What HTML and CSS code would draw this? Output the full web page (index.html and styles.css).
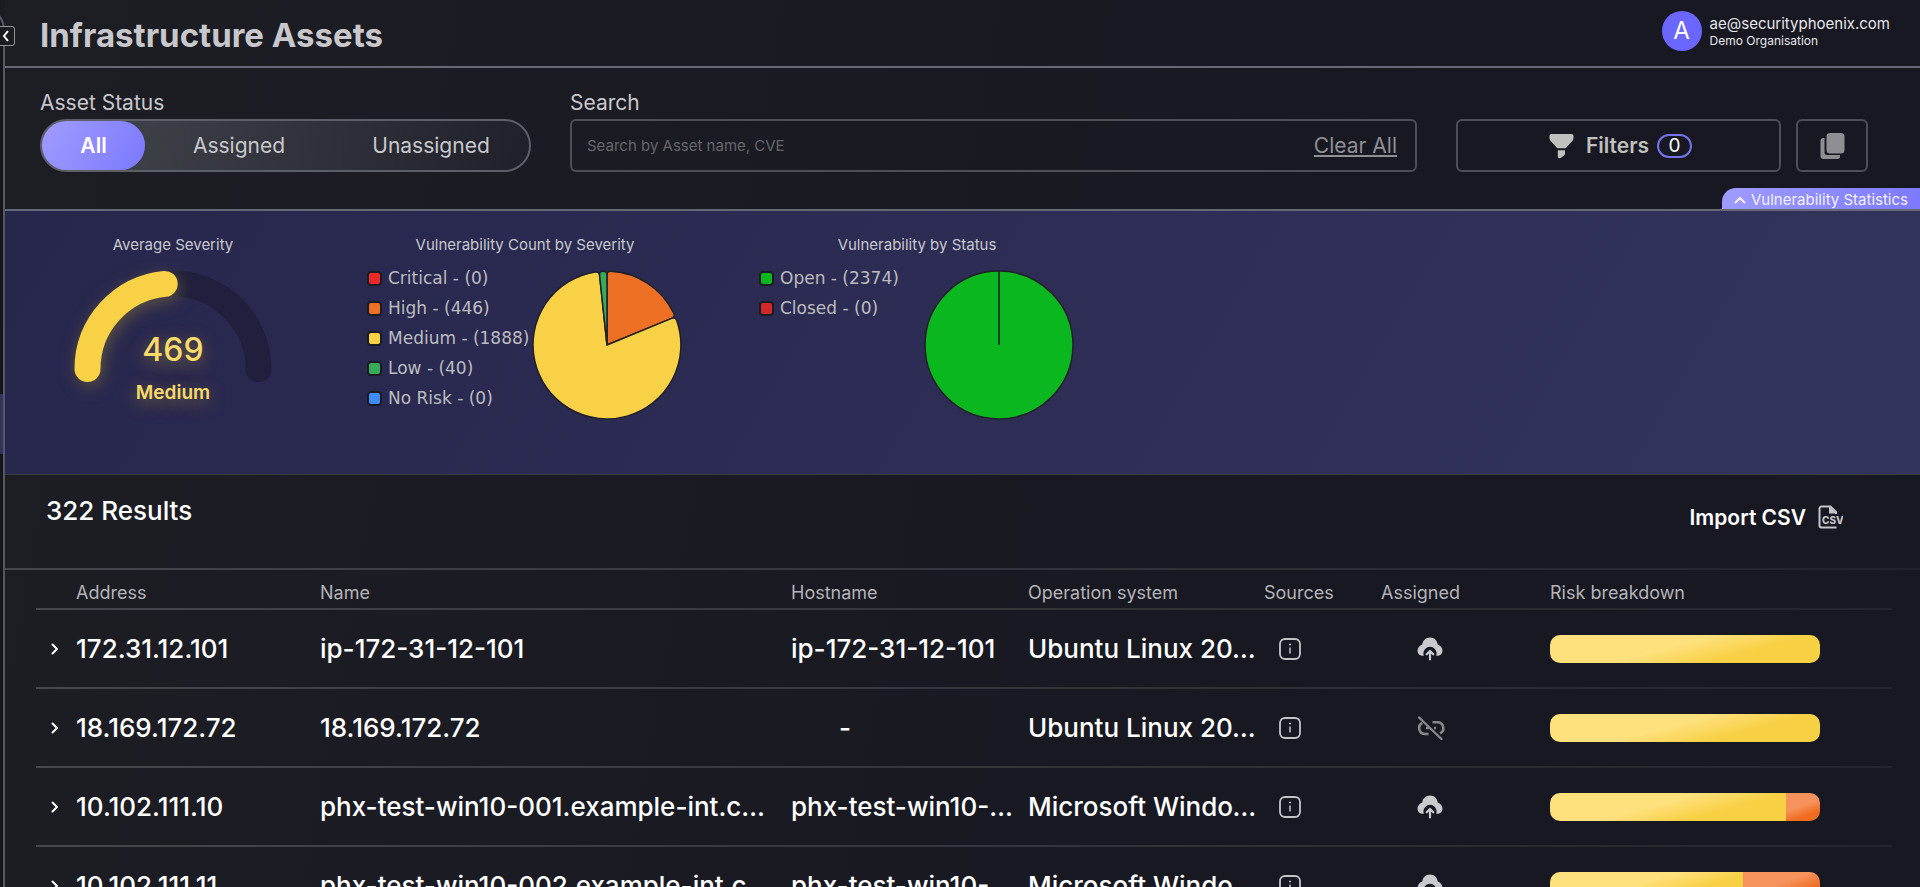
FILE: index.html
```html
<!DOCTYPE html>
<html lang="en">
  <head>
    <meta charset="UTF-8" />
    <meta name="viewport" content="width=device-width, initial-scale=1.0" />
    <title>Infrastructure Assets</title>
    <link rel="stylesheet" href="styles.css">
  </head>
  <body>
    <!-- icons used more than once -->
    <svg class="sprite" aria-hidden="true">
      <symbol id="chevron" viewBox="0 0 10 14">
        <path d="M2.500 2.500 7 7l-4.500 4.500" fill="none" stroke="currentColor" stroke-width="2" stroke-linecap="round" stroke-linejoin="round" />
      </symbol>
      <symbol id="info" viewBox="0 0 22 22">
        <rect x="1" y="1" width="20" height="20" rx="5" fill="none" stroke="currentColor" stroke-width="1.800" />
        <path d="M11 9.500v6" stroke="currentColor" stroke-width="1.500" />
        <circle cx="11" cy="6.500" r="1" fill="currentColor" />
      </symbol>
      <symbol id="cloud" viewBox="0 0 26 24">
        <path d="M13 0.500c-4.200 0-7.300 2.800-7.700 7C2.500 8.500 0.500 11 0.500 14c0 2.700 2 4.700 4.500 4.700h1.800a6.600 6.600 0 1 1 12.400 0H21c2.500 0 4.500-2 4.500-4.700 0-3-2-5.500-4.800-6.500-.4-4.200-3.500-7-7.700-7z" fill="currentColor" />
        <path d="M13 22.500v-8M9.700 17.300 13 14l3.300 3.300" fill="none" stroke="currentColor" stroke-width="2.200" stroke-linecap="round" stroke-linejoin="round" />
      </symbol>
      <symbol id="unlink" viewBox="0 0 28 24">
        <path d="M11.500 18H8.200a6 6 0 0 1-3-11.200M15.500 6.200h4.800a5.900 5.900 0 0 1 2.700 11.200M9 12h3.500M17 12h2" fill="none" stroke="currentColor" stroke-width="2.600" />
        <path d="M2 1.500 24.500 23" stroke="currentColor" stroke-width="2.400" stroke-linecap="round" />
      </symbol>
    </svg>

    <div class="app">
      <aside class="rail">
        <div class="rail-panel">
          <div class="rail-active"></div>
        </div>
      </aside>
      <button class="rail-toggle" type="button" aria-label="Collapse menu">
        <svg width="8" height="14" viewBox="0 0 8 14"><path d="M6 2 2 7l4 5" fill="none" stroke="currentColor" stroke-width="2" /></svg>
      </button>

      <div class="page">
        <header class="header">
          <h1>Infrastructure Assets</h1>
          <div class="user">
            <span class="avatar">A</span>
            <div>
              <div class="user-mail">ae@securityphoenix.com</div>
              <div class="user-org">Demo Organisation</div>
            </div>
          </div>
        </header>

        <div class="toolbar">
          <div class="field">
            <span class="label" id="statusLabel">Asset Status</span>
            <div class="switch" role="group" aria-labelledby="statusLabel">
              <button type="button" class="active">All</button>
              <button type="button">Assigned</button>
              <button type="button">Unassigned</button>
            </div>
          </div>
          <div class="field field-search">
            <label class="label" for="search">Search</label>
            <div class="search">
              <input id="search" type="text" placeholder="Search by Asset name, CVE" />
              <button type="button" class="clear">Clear All</button>
            </div>
          </div>
          <div class="actions">
            <button type="button" class="box filters">
              <svg width="25" height="26" viewBox="0 0 25 26" fill="currentColor">
                <path d="M2.500 1h20a2 2 0 0 1 2 2v2.200c0 1-.4 1.800-1 2.500l-6.800 7.600H8.300L1.500 7.700C.9 7 .5 6.200.5 5.200V3a2 2 0 0 1 2-2z" />
                <path d="M8.800 17.300h7.200v3.200c0 .9-.4 1.600-1 2.100l-3.500 2.300c-1.300.8-2.700.2-2.700-1.400z" />
              </svg>
              Filters
              <span class="count">0</span>
            </button>
            <button type="button" class="box copy" aria-label="Copy">
              <svg width="25" height="28" viewBox="0 0 25 28" fill="currentColor">
                <path d="M4.500 6v14.500A2.500 2.500 0 0 0 7 23h13v1.500a2.500 2.500 0 0 1-2.500 2.500H3.500A3 3 0 0 1 .5 24V9a3 3 0 0 1 3-3z" />
                <rect x="6.500" y="1" width="18" height="20.500" rx="3.500" />
              </svg>
            </button>
          </div>
          <button type="button" class="stats-tab">
            <svg width="12" height="8" viewBox="0 0 12 8"><path d="m1.500 6.500 4.500-4.500 4.500 4.500" fill="none" stroke="currentColor" stroke-width="2" stroke-linecap="round" /></svg>
            Vulnerability Statistics
          </button>
        </div>

        <section class="stats">
          <div class="stat stat-gauge">
            <h2>Average Severity</h2>
            <div class="gauge">
              <svg width="240" height="150" viewBox="0 0 240 150">
                <path class="gauge-track" d="M34.500 111a85.500 85.500 0 0 1 171 0" />
                <path class="gauge-value" d="M34.500 111A85.500 85.500 0 0 1 111.700 25.900" />
              </svg>
              <div class="gauge-text">
                <div class="gauge-number">469</div>
                <div class="gauge-level">Medium</div>
              </div>
            </div>
          </div>

          <div class="stat">
            <h2>Vulnerability Count by Severity</h2>
            <div class="chart">
              <ul class="legend">
                <li><i class="critical"></i>Critical - (0)</li>
                <li><i class="high"></i>High - (446)</li>
                <li><i class="medium"></i>Medium - (1888)</li>
                <li><i class="low"></i>Low - (40)</li>
                <li><i class="norisk"></i>No Risk - (0)</li>
              </ul>
              <svg class="pie" width="152" height="152" viewBox="0 0 150 150">
                <path fill="#ee7024" d="M75 75V6Q75 2 79 2.100A73 73 0 0 1 140.800 43.500Q142.500 47.200 138.800 48.700Z" />
                <path fill="#f8d147" d="M75 75 138.800 48.700Q142.500 47.200 143.900 51A73 73 0 1 1 63.300 2.900Q67.200 2.400 67.700 6.400Z" />
                <path fill="#36ac5b" d="M75 75 67.700 6.400Q67.200 2.400 71 2.100Q75 2 75 6Z" />
              </svg>
            </div>
          </div>

          <div class="stat">
            <h2>Vulnerability by Status</h2>
            <div class="chart">
              <ul class="legend">
                <li><i class="open"></i>Open - (2374)</li>
                <li><i class="closed"></i>Closed - (0)</li>
              </ul>
              <svg class="pie" width="152" height="152" viewBox="0 0 150 150">
                <circle cx="75" cy="75" r="73" fill="#0ab71f" />
                <path d="M75 75V2" />
              </svg>
            </div>
          </div>
        </section>

        <section class="results">
          <div class="results-head">
            <h2>322 Results</h2>
            <button type="button" class="import">
              Import CSV
              <svg width="25" height="24" viewBox="0 0 25 24">
                <path d="M18.500 22.500H3.500a2 2 0 0 1-2-2v-17a2 2 0 0 1 2-2h9l5.500 5.500v2" fill="none" stroke="#c4c4c9" stroke-width="2" />
                <path d="M11 1v7.500h7.500z" fill="#c4c4c9" />
                <text x="4" y="18.500" fill="#c4c4c9">CSV</text>
              </svg>
            </button>
          </div>

          <table class="assets">
            <colgroup>
              <col class="col-toggle" />
              <col class="col-address" />
              <col class="col-name" />
              <col class="col-host" />
              <col class="col-os" />
              <col class="col-sources" />
              <col class="col-assigned" />
              <col class="col-risk" />
            </colgroup>
            <thead>
              <tr>
                <th></th>
                <th>Address</th>
                <th>Name</th>
                <th>Hostname</th>
                <th>Operation system</th>
                <th>Sources</th>
                <th>Assigned</th>
                <th>Risk breakdown</th>
              </tr>
            </thead>
            <tbody>
              <tr>
                <td><button type="button" class="expand" aria-label="Expand row"><svg width="10" height="14"><use href="#chevron" /></svg></button></td>
                <td>172.31.12.101</td>
                <td class="name">ip-172-31-12-101</td>
                <td>ip-172-31-12-101</td>
                <td>Ubuntu Linux 20.04</td>
                <td class="source"><svg width="22" height="22"><use href="#info" /></svg></td>
                <td class="assigned"><svg width="26" height="24"><use href="#cloud" /></svg></td>
                <td><div class="risk"><span class="risk-medium" style="width: 100%"></span></div></td>
              </tr>
              <tr>
                <td><button type="button" class="expand" aria-label="Expand row"><svg width="10" height="14"><use href="#chevron" /></svg></button></td>
                <td>18.169.172.72</td>
                <td class="name">18.169.172.72</td>
                <td class="empty">-</td>
                <td>Ubuntu Linux 20.04</td>
                <td class="source"><svg width="22" height="22"><use href="#info" /></svg></td>
                <td class="assigned unassigned"><svg width="28" height="24"><use href="#unlink" /></svg></td>
                <td><div class="risk"><span class="risk-medium" style="width: 100%"></span></div></td>
              </tr>
              <tr>
                <td><button type="button" class="expand" aria-label="Expand row"><svg width="10" height="14"><use href="#chevron" /></svg></button></td>
                <td>10.102.111.10</td>
                <td class="name">phx-test-win10-001.example-int.com</td>
                <td>phx-test-win10-001</td>
                <td>Microsoft Windows 10</td>
                <td class="source"><svg width="22" height="22"><use href="#info" /></svg></td>
                <td class="assigned"><svg width="26" height="24"><use href="#cloud" /></svg></td>
                <td><div class="risk"><span class="risk-medium" style="width: 87.500%"></span><span class="risk-high" style="width: 12.500%"></span></div></td>
              </tr>
              <tr>
                <td><button type="button" class="expand" aria-label="Expand row"><svg width="10" height="14"><use href="#chevron" /></svg></button></td>
                <td>10.102.111.11</td>
                <td class="name">phx-test-win10-002.example-int.com</td>
                <td>phx-test-win10-002</td>
                <td>Microsoft Windows 10</td>
                <td class="source"><svg width="22" height="22"><use href="#info" /></svg></td>
                <td class="assigned"><svg width="26" height="24"><use href="#cloud" /></svg></td>
                <td><div class="risk"><span class="risk-medium" style="width: 71.400%"></span><span class="risk-high" style="width: 28.600%"></span></div></td>
              </tr>
            </tbody>
          </table>
        </section>
      </div>
    </div>
  </body>
</html>
```
FILE: styles.css
```css
* {
  box-sizing: border-box;
}
body {
  margin: 0;
  height: 100vh;
  overflow: hidden;
  font-family: Inter, "Liberation Sans", sans-serif;
  color: #c8c8cc;
  background: linear-gradient(100deg, #1d1d24, #181822 70%);
}
h1,
h2 {
  margin: 0;
}
button {
  font-family: inherit;
  color: inherit;
  background: none;
  border: 0;
  padding: 0;
  cursor: pointer;
}
.sprite {
  display: none;
}
.app {
  display: flex;
  position: relative;
}
.page {
  flex: 1;
  min-width: 0;
}

/* collapsed sidebar edge */
.rail {
  position: relative;
  flex: 0 0 5px;
  height: 100vh;
  overflow: hidden;
  background: #1b1b23;
}
.rail-panel {
  position: absolute;
  top: 6px;
  right: 0;
  bottom: -40px;
  width: 60px;
  border: 2px solid #555863;
  border-radius: 24px;
  background: #15151b;
}
.rail-active {
  margin-top: 386px;
  height: 60px;
  background: #33325c;
}
.rail-toggle {
  position: absolute;
  top: 26px;
  left: -6px;
  width: 21px;
  height: 20px;
  padding-left: 3px;
  border: 1px solid #94949c;
  border-radius: 3px;
  background: #1b1b22;
  color: #fff;
  line-height: 0;
}

.header {
  display: flex;
  justify-content: space-between;
  height: 68px;
  padding: 11px 30px 0 35px;
  border-bottom: 2px solid #666975;
}
.header h1 {
  font-size: 33px;
  line-height: 48px;
  font-weight: 700;
}
.user {
  display: flex;
  gap: 8px;
  height: 40px;
  color: #e6e6ea;
}
.avatar {
  width: 40px;
  height: 40px;
  border-radius: 50%;
  background: #6a66ff;
  color: #fff;
  font-size: 24px;
  line-height: 40px;
  text-align: center;
}
.user-mail {
  padding-top: 2px;
  font-size: 15px;
  line-height: 22px;
}
.user-org {
  font-size: 12px;
  line-height: 12px;
}

.toolbar {
  position: relative;
  display: flex;
  align-items: flex-end;
  gap: 39px;
  height: 143px;
  padding: 0 52px 37px 35px;
  border-bottom: 2px solid #666975;
}
.label {
  display: block;
  font-size: 21px;
  line-height: 24px;
  margin-bottom: 4px;
}
.switch {
  display: flex;
  width: 491px;
  height: 53px;
  border: 2px solid #5d5f68;
  border-radius: 27px;
  background: linear-gradient(100deg, #45474f, #1f2029);
}
.switch button {
  flex: 196 0 0;
  font-size: 21px;
}
.switch button:nth-child(2) {
  flex-grow: 188;
}
.switch .active {
  flex: 0 0 103px;
  border-radius: 25px;
  background: linear-gradient(120deg, #a09cff, #7c79fd);
  color: #fff;
  font-weight: 600;
}
.field-search {
  flex: 1;
}
.search,
.box {
  height: 53px;
  border: 2px solid #4e4f56;
  border-radius: 6px;
}
.search {
  display: flex;
  align-items: center;
  padding: 0 18px 0 15px;
}
.search input {
  flex: 1;
  min-width: 0;
  padding: 0;
  border: 0;
  outline: none;
  background: none;
  color: #fff;
  font-family: inherit;
  font-size: 15px;
}
.search input::placeholder {
  color: #66666c;
}
.clear {
  font-size: 21px;
  text-decoration: underline;
  color: #8f8f95;
}
.actions {
  display: flex;
  gap: 15px;
}
.filters {
  display: flex;
  align-items: center;
  justify-content: center;
  gap: 8px;
  width: 325px;
  padding-left: 4px;
  font-size: 21px;
  font-weight: 600;
  color: #c0c0bf;
}
.filters svg {
  margin-right: 4px;
}
.count {
  width: 35px;
  height: 24px;
  border: 2px solid #7672ea;
  border-radius: 12px;
  color: #fff;
  font-size: 19px;
  font-weight: 400;
  line-height: 20px;
}
.copy {
  width: 72px;
  color: #8e8e93;
  line-height: 0;
}
.stats-tab {
  position: absolute;
  right: 0;
  bottom: 0;
  display: flex;
  align-items: center;
  gap: 5px;
  height: 21px;
  padding: 2px 12px 0;
  border-top-left-radius: 14px;
  background: linear-gradient(120deg, #a09cff, #7c79fd);
  color: #f0f0ff;
  font-size: 15px;
}

.stats {
  display: flex;
  height: 263px;
  padding: 24px 0 0 12px;
  background: linear-gradient(120deg, #27264d, #33345c);
}
.stat {
  width: 392px;
}
.stat-gauge {
  width: 312px;
}
.stat h2 {
  font-size: 15px;
  font-weight: 400;
  line-height: 20px;
  text-align: center;
}
.gauge {
  position: relative;
  text-align: center;
  color: #fadb6a;
  text-shadow: 0 4px 16px #80703f;
}
.gauge svg {
  display: block;
  margin: 3px auto 0;
}
.gauge path {
  fill: none;
  stroke-width: 26;
  stroke-linecap: round;
}
.gauge-track {
  stroke: #201f3d;
}
.gauge-value {
  stroke: #f8d147;
  filter: drop-shadow(2px 4px 8px #5c5240);
}
.gauge-text {
  position: absolute;
  top: 72px;
  left: 0;
  right: 0;
}
.gauge-number {
  font-size: 32px;
  font-weight: 500;
  line-height: 40px;
}
.gauge-level {
  margin-top: 8px;
  font-size: 19px;
  font-weight: 600;
  line-height: 30px;
}
.chart {
  display: flex;
  align-items: flex-start;
  padding: 8px 0 0 38px;
}
.legend {
  width: 164px;
  margin: 0;
  padding: 0;
  list-style: none;
  font-family: "DejaVu Sans", sans-serif;
  font-size: 17px;
  line-height: 30px;
  white-space: nowrap;
  color: #bcbcbf;
}
.legend li {
  display: flex;
  align-items: center;
  gap: 6px;
}
.legend i {
  width: 15px;
  height: 15px;
  border: 2px solid #1b1b24;
  border-radius: 4px;
}
.critical { background: #e92a29; }
.high { background: #ee7024; }
.medium { background: #f8d147; }
.low { background: #36ac5b; }
.norisk { background: #3f8cf4; }
.open { background: #0ab71f; }
.closed { background: #d32829; }
.pie {
  flex: none;
  margin-top: 6px;
}
.pie > * {
  stroke: #20202a;
  stroke-width: 1.5;
}

.results {
  border-top: 1px solid #3c3c43;
}
.results-head {
  display: flex;
  justify-content: space-between;
  height: 95px;
  padding: 20px 77px 0 41px;
  background: linear-gradient(90deg, #46464c, #22222b) bottom / 100% 2px no-repeat;
  color: #fff;
}
.results-head h2 {
  font-size: 26px;
  font-weight: 500;
  line-height: 32px;
}
.import {
  display: flex;
  align-items: center;
  gap: 12px;
  height: 44px;
  font-size: 21px;
  font-weight: 600;
}
.import text {
  font-size: 10px;
  font-weight: 800;
}
.assets {
  table-layout: fixed;
  width: calc(100% - 59px);
  margin-left: 31px;
  border-collapse: collapse;
}
.col-toggle { width: 40px; }
.col-address { width: 244px; }
.col-host { width: 237px; }
.col-os { width: 236px; }
.col-sources { width: 117px; }
.col-assigned { width: 169px; }
.col-risk { width: 342px; }
.assets tr {
  background: linear-gradient(90deg, #46464c, #24242c) bottom / 100% 2px no-repeat;
}
.assets th {
  height: 40px;
  padding: 5px 0 0;
  font-size: 18px;
  font-weight: 400;
  text-align: left;
  color: #b4b4b8;
}
.assets td {
  height: 79px;
  padding: 0 4px 2px 0;
  overflow: hidden;
  font-size: 26px;
  font-weight: 500;
  color: #fff;
  white-space: nowrap;
  text-overflow: ellipsis;
}
.assets svg {
  display: block;
}
.assets .name {
  padding-right: 16px;
}
.assets .empty {
  padding-left: 48px;
}
.expand {
  display: block;
  margin-left: 14px;
}
.assets .source {
  padding-left: 15px;
  color: #c4c4c8;
}
.assets .assigned {
  padding-left: 36px;
  color: #c9c9ce;
}
.assets .unassigned {
  color: #86868b;
}
.risk {
  display: flex;
  width: 270px;
  height: 28px;
  border-radius: 10px;
  overflow: hidden;
}
.risk-medium {
  background: linear-gradient(165deg, #fee07c 45%, #f8d044 70%);
}
.risk-high {
  background: linear-gradient(160deg, #f6935c 45%, #ef6c20 75%);
}
```
